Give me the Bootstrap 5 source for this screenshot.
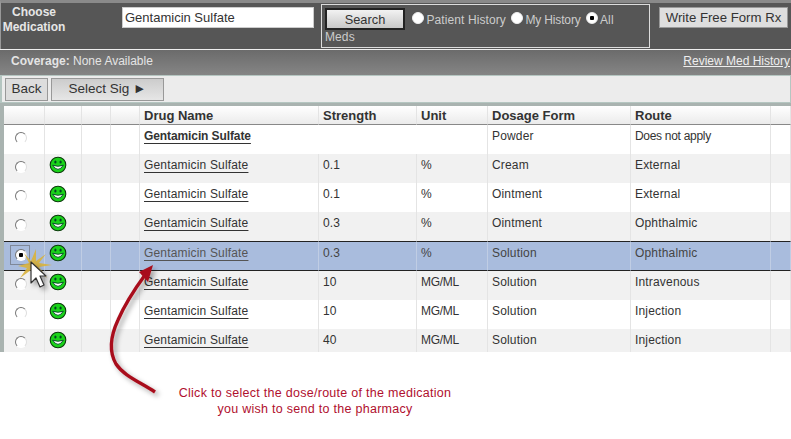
<!DOCTYPE html>
<html lang="en">
<head>
  <meta charset="UTF-8">
  <title>Choose Medication</title>
  <link rel="stylesheet" href="https://cdn.jsdelivr.net/npm/bootstrap@5.3.3/dist/css/bootstrap.min.css">
  <style>
    html, body { height: 439px; overflow: hidden; }
    body { background: #fff; font-family: "Liberation Sans", Arial, sans-serif; font-size: 12px; color: #333; position: relative; }
    .med-top { height: 49px; background: #565656; border-top: 3px solid #8a8a8a; border-left: 1px solid #999; color: #ddd; }
    .med-title { width: 66px; margin-top: 2px; font-weight: 700; font-size: 12px; line-height: 15px; color: #e6e6e6; text-align: center; }
    .med-input { width: 192px; height: 21px; margin: 4px 0 0 55px; padding: 0 2px; border: 1px solid #ccc; border-radius: 0; font-size: 13px; color: #333; background: #fff; }
    .med-box { width: 329px; height: 44px; margin: 1px 0 0 7px; border: 1px solid #ddd; padding: 3px; font-size: 12px; line-height: 15px; color: #ccc; letter-spacing: .1px; }
    .med-search { width: 80px; height: 22px; padding: 0; border: 2px solid #222; border-radius: 0; background: linear-gradient(#f2f2f2, #c8c8c8); font-size: 12.8px; color: #333; }
    .med-free { width: 129px; height: 21px; margin: 4px 0 0 9px; padding: 0; border: 1px solid #999; border-radius: 0; background: #dedede; font-size: 13.2px; color: #333; }
    .med-radio { appearance: none; width: 12px; height: 12px; margin: 0 2px 0 0; border-radius: 50%; background: #fff; border: 1px solid; border-color: #777 #ddd #fff #777; vertical-align: -1px; }
    .med-opts .med-radio { border-color: #eee; vertical-align: 0; }
    .med-radio:checked { background: radial-gradient(circle, #000 0 2px, #fff 2.5px); }
    .med-opts label { margin-right: 2px; }
    .med-opts label:nth-of-type(2) { letter-spacing: -.15px; }
    .med-cov { height: 26px; border-top: 1px solid #eee; background: linear-gradient(#6b6b6b, #858585); color: #e4e4e4; padding: 2px 1px 0 11px; }
    .med-cov a { color: #eee; }
    .med-tools { height: 28px; background: #ececec; border: 1px solid #b5c6c1; border-left-width: 2px; padding: 2px 3px 3px; gap: 3px; }
    .med-back, .med-sig { height: 23px; padding: 0; border: 1px solid #999; border-radius: 0; background: #ddd; font-size: 13.5px; color: #333; }
    .med-back { width: 43px; }
    .med-sig { width: 113px; background: linear-gradient(#ccc, #e6e6e6); }
    .med-wrap { height: 249px; overflow: hidden; border-top: 3px solid #a9b3b0; border-left: 4px solid #a9b3b0; }
    .med-table { table-layout: fixed; width: 787px; border-collapse: separate; border-spacing: 0; font-size: 12px; letter-spacing: .17px; }
    .med-table th, .med-table td { border-right: 1px solid #e4e4e4; padding: 0 4px; vertical-align: top; }
    .med-table th { height: 19px; font-size: 13px; line-height: 17px; padding-top: 1px; font-weight: 700; letter-spacing: 0; background: linear-gradient(#fff, #ebebeb); border-bottom: 1px solid #888; }
    .med-table td { height: 29px; padding-top: 3px; line-height: 16px; background: #fff; }
    .med-table td:nth-child(7) { letter-spacing: -.3px; }
    .med-table tr:nth-child(even) td { background: #f1f1f1; }
    .med-table tr.first a { letter-spacing: -.1px; }
    .med-table tr.picked td { height: 30px; background: #a9bcdd; border-top: 1px solid #222; border-bottom: 1px solid #222; border-right-color: #c0cde4; color: #444; }
    .med-table a { color: #333; text-underline-offset: 3px; }
    .med-table tr.picked a { color: #555; }
    .med-table tr td.c-radio { padding: 6px 0 0 11px; }
    .med-table tr td.c-face { padding: 2px 0 0 4px; }
    .med-note { margin-top: 33px; width: 630px; color: #b0102e; font-size: 12.5px; line-height: 16px; text-align: center; letter-spacing: .28px; }
    .med-over { position: absolute; left: 0; top: 0; pointer-events: none; }
  </style>
</head>
<body>
  <div class="med-top d-flex">
    <div class="med-title">Choose Medication</div>
    <input type="text" class="med-input" value="Gentamicin Sulfate">
    <div class="med-box med-opts">
      <button class="med-search me-1">Search</button>
      <label><input type="radio" name="src" class="med-radio">Patient History</label>
      <label><input type="radio" name="src" class="med-radio">My History</label>
      <label><input type="radio" name="src" class="med-radio" checked>All</label>
      <div>Meds</div>
    </div>
    <button class="med-free">Write Free Form Rx</button>
  </div>
  <div class="med-cov d-flex justify-content-between">
    <div><b>Coverage:</b> None Available</div>
    <a href="#">Review Med History</a>
  </div>
  <div class="med-tools d-flex">
    <button class="med-back">Back</button>
    <button class="med-sig">Select Sig ►</button>
  </div>
  <div class="med-wrap">
    <table class="med-table">
      <colgroup>
        <col style="width:41px"><col style="width:37px"><col style="width:29px"><col style="width:29px">
        <col style="width:179px"><col style="width:98px"><col style="width:71px"><col style="width:143px">
        <col style="width:140px"><col style="width:20px">
      </colgroup>
      <thead>
        <tr><th></th><th></th><th></th><th></th><th>Drug Name</th><th>Strength</th><th>Unit</th><th>Dosage Form</th><th>Route</th><th></th></tr>
      </thead>
      <tbody id="rows"></tbody>
    </table>
  </div>
  <div class="med-note">Click to select the dose/route of the medication<br>you wish to send to the pharmacy</div>

  <svg class="med-over" width="791" height="439" viewBox="0 0 791 439">
    <defs>
      <filter id="soft" x="-30%" y="-30%" width="160%" height="160%"><feDropShadow dx="3" dy="3" stdDeviation="2.5" flood-color="#000" flood-opacity=".35"/></filter>
    </defs>
    <g filter="url(#soft)" fill="#a80f1c">
      <path d="M155 392 C140 382 124 376 116 364 C108 350 111 335 118 320 C125 304 134 290 145 275" fill="none" stroke="#a80f1c" stroke-width="3.4"/>
      <path d="M153 265 L139 272 L148 282Z"/>
    </g>
    <rect x="10.5" y="245.5" width="19" height="19" fill="none" stroke="#555" stroke-dasharray="1 1"/>
    <path d="M36 249 L36 261 L46 254 L39 263 L52 265 L39 267 L47 278 L36 270 L33 281 L31 270 L20 278 L27 268 L18 266 L29 263 L24 253 L31 261Z" fill="#d9b23c" opacity=".9"/>
    <path d="M31 262 V283 L36 278 L40 287 L44 285 L40 276 L46 276Z" fill="#fff" stroke="#333" stroke-width="1.2" stroke-linejoin="round" filter="url(#soft)"/>
  </svg>

  <script>
    const ROWS = [
      ["0.1", "%", "Cream", "External"],
      ["0.1", "%", "Ointment", "External"],
      ["0.3", "%", "Ointment", "Ophthalmic"],
      ["0.3", "%", "Solution", "Ophthalmic"],
      ["10", "MG/ML", "Solution", "Intravenous"],
      ["10", "MG/ML", "Solution", "Injection"],
      ["40", "MG/ML", "Solution", "Injection"]
    ];
    const face = `<svg width="18" height="18" viewBox="0 0 18 18"><circle cx="9" cy="9" r="7.8" fill="#1ad31a" stroke="#0a3a0a" stroke-width="1.1"/><ellipse cx="6.4" cy="6" rx="1.1" ry="1.6" fill="#042"/><ellipse cx="11.6" cy="6" rx="1.1" ry="1.6" fill="#042"/><path d="M3.6 9.2 Q9 17.5 14.4 9.2 Q9 11.4 3.6 9.2Z" fill="#fff" stroke="#042" stroke-width=".9"/></svg>`;
    let html = `<tr class="first"><td class="c-radio"><input type="radio" name="drug" class="med-radio"></td><td></td><td></td><td></td>
      <td colspan="3"><a href="#"><b>Gentamicin Sulfate</b></a></td><td>Powder</td><td>Does not apply</td><td></td></tr>`;
    ROWS.forEach((r, i) => {
      html += `<tr class="${i === 3 ? "picked" : ""}"><td class="c-radio"><input type="radio" name="drug" class="med-radio" ${i === 3 ? "checked" : ""}></td>
        <td class="c-face">${face}</td><td></td><td></td><td><a href="#">Gentamicin Sulfate</a></td>
        <td>${r[0]}</td><td>${r[1]}</td><td>${r[2]}</td><td>${r[3]}</td><td></td></tr>`;
    });
    document.getElementById("rows").innerHTML = html;
  </script>
  <script src="https://cdn.jsdelivr.net/npm/bootstrap@5.3.3/dist/js/bootstrap.bundle.min.js"></script>
</body>
</html>
